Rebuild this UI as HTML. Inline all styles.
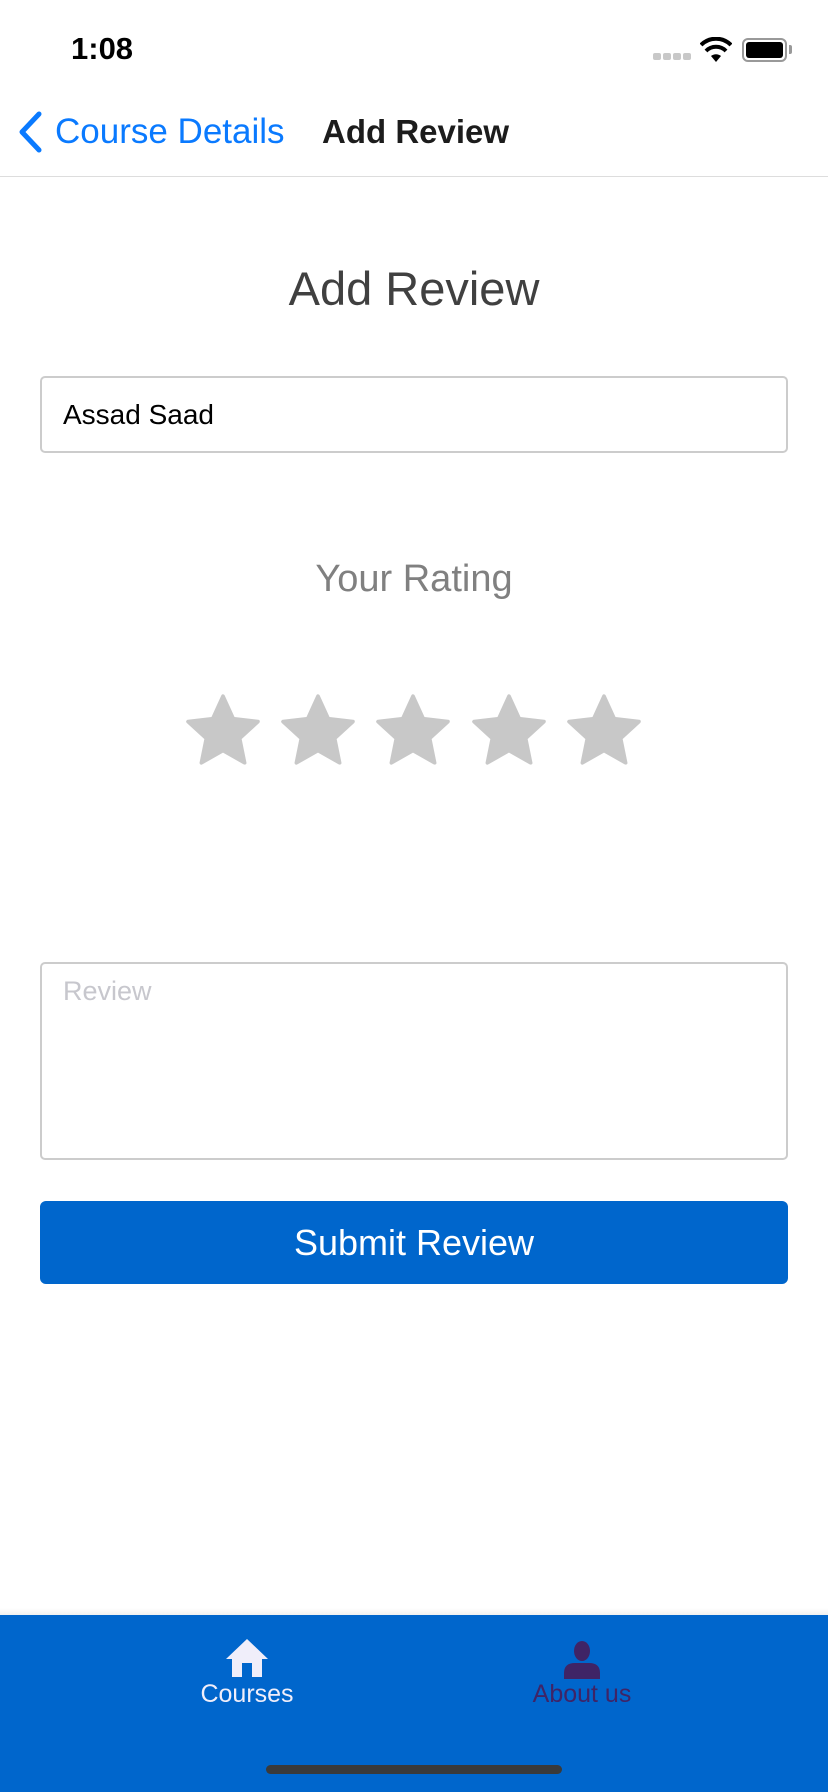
<!DOCTYPE html>
<html><head><meta charset="utf-8"><style>
*{margin:0;padding:0;box-sizing:border-box}
body{width:828px;height:1792px;background:#fff;position:relative;overflow:hidden;font-family:"Liberation Sans",sans-serif}
.a{position:absolute;white-space:nowrap}
</style></head><body>
<div class="a" style="left:71px;top:31px;font-size:31px;font-weight:bold;color:#000">1:08</div>
<div class="a" style="left:653px;top:53px;width:8px;height:7px;border-radius:2px;background:#c8c8c8"></div>
<div class="a" style="left:663px;top:53px;width:8px;height:7px;border-radius:2px;background:#c8c8c8"></div>
<div class="a" style="left:673px;top:53px;width:8px;height:7px;border-radius:2px;background:#c8c8c8"></div>
<div class="a" style="left:683px;top:53px;width:8px;height:7px;border-radius:2px;background:#c8c8c8"></div>
<svg class="a" style="left:700px;top:37px" width="32" height="26" viewBox="0 0 32 26"><path d="M16 25 L11 19 A8 8 0 0 1 21 19 Z" fill="#000"/><path d="M6 14 A14 14 0 0 1 26 14" stroke="#000" stroke-width="4" fill="none"/><path d="M1 8 A21 21 0 0 1 31 8" stroke="#000" stroke-width="4" fill="none"/></svg>
<div class="a" style="left:742px;top:38px;width:45px;height:24px;border:2px solid #999;border-radius:6px;padding:2px"><div style="width:100%;height:100%;background:#000;border-radius:3px"></div></div>
<div class="a" style="left:789px;top:45px;width:3px;height:9px;background:#999;border-radius:0 2px 2px 0"></div>
<svg class="a" style="left:15px;top:110px" width="30" height="44" viewBox="0 0 30 44"><path d="M24 4 L7 22 L24 40" stroke="#0a7aff" stroke-width="5" fill="none" stroke-linecap="round" stroke-linejoin="round"/></svg>
<div class="a" style="left:55px;top:112px;font-size:35px;color:#0a7aff">Course Details</div>
<div class="a" style="left:322px;top:113px;font-size:33px;font-weight:bold;color:#1c1c1c">Add Review</div>
<div class="a" style="left:0;top:176px;width:828px;height:1px;background:#ddd"></div>
<div class="a" style="left:0;top:261px;width:828px;text-align:center;font-size:47px;color:#404040">Add Review</div>
<div class="a" style="left:40px;top:376px;width:748px;height:77px;border:2px solid #ccc;border-radius:5px"></div>
<div class="a" style="left:63px;top:399px;font-size:28px;color:#000">Assad Saad</div>
<div class="a" style="left:0;top:558px;width:828px;text-align:center;font-size:38px;color:#808080">Your Rating</div>
<svg class="a" style="left:0;top:690px" width="828" height="84" viewBox="0 0 828 84">
<defs><path id="s" transform="scale(0.92)" d="M0,-40 L11.2,-15.5 L38,-12.4 L18.1,5.9 L23.5,32.4 L0,19 L-23.5,32.4 L-18.1,5.9 L-38,-12.4 L-11.2,-15.5 Z" fill="#c8c8c8" stroke="#c8c8c8" stroke-width="4" stroke-linejoin="round"/></defs>
<use href="#s" x="223" y="43"/><use href="#s" x="318" y="43"/><use href="#s" x="413" y="43"/><use href="#s" x="509" y="43"/><use href="#s" x="604" y="43"/>
</svg>
<div class="a" style="left:40px;top:962px;width:748px;height:198px;border:2px solid #ccc;border-radius:5px"></div>
<div class="a" style="left:63px;top:976px;font-size:27px;color:#c7c7cd">Review</div>
<div class="a" style="left:40px;top:1201px;width:748px;height:83px;background:#0066cc;border-radius:6px;color:#fff;font-size:36px;text-align:center;line-height:83px">Submit Review</div>
<div class="a" style="left:0;top:1608px;width:828px;height:8px;background:linear-gradient(#fff,#eee)"></div>
<div class="a" style="left:0;top:1615px;width:828px;height:177px;background:#0066cc"></div>
<svg class="a" style="left:225px;top:1639px" width="44" height="38" viewBox="0 0 44 38"><path d="M22 0 L43 20 L37 20 L37 38 L27 38 L27 24 L17 24 L17 38 L7 38 L7 20 L1 20 Z" fill="#f0eefa"/></svg>
<div class="a" style="left:147px;top:1680px;width:200px;text-align:center;font-size:25px;color:#f0eefa">Courses</div>
<svg class="a" style="left:563px;top:1641px" width="38" height="38" viewBox="0 0 38 38"><ellipse cx="19" cy="10" rx="8" ry="10" fill="#3f2466"/><path d="M1 38 L1 32 Q1 22 12 22 L26 22 Q37 22 37 32 L37 38 Z" fill="#3f2466"/></svg>
<div class="a" style="left:482px;top:1680px;width:200px;text-align:center;font-size:25px;color:#3f2466">About us</div>
<div class="a" style="left:266px;top:1765px;width:296px;height:9px;border-radius:5px;background:#3a3a3a"></div>
</body></html>
